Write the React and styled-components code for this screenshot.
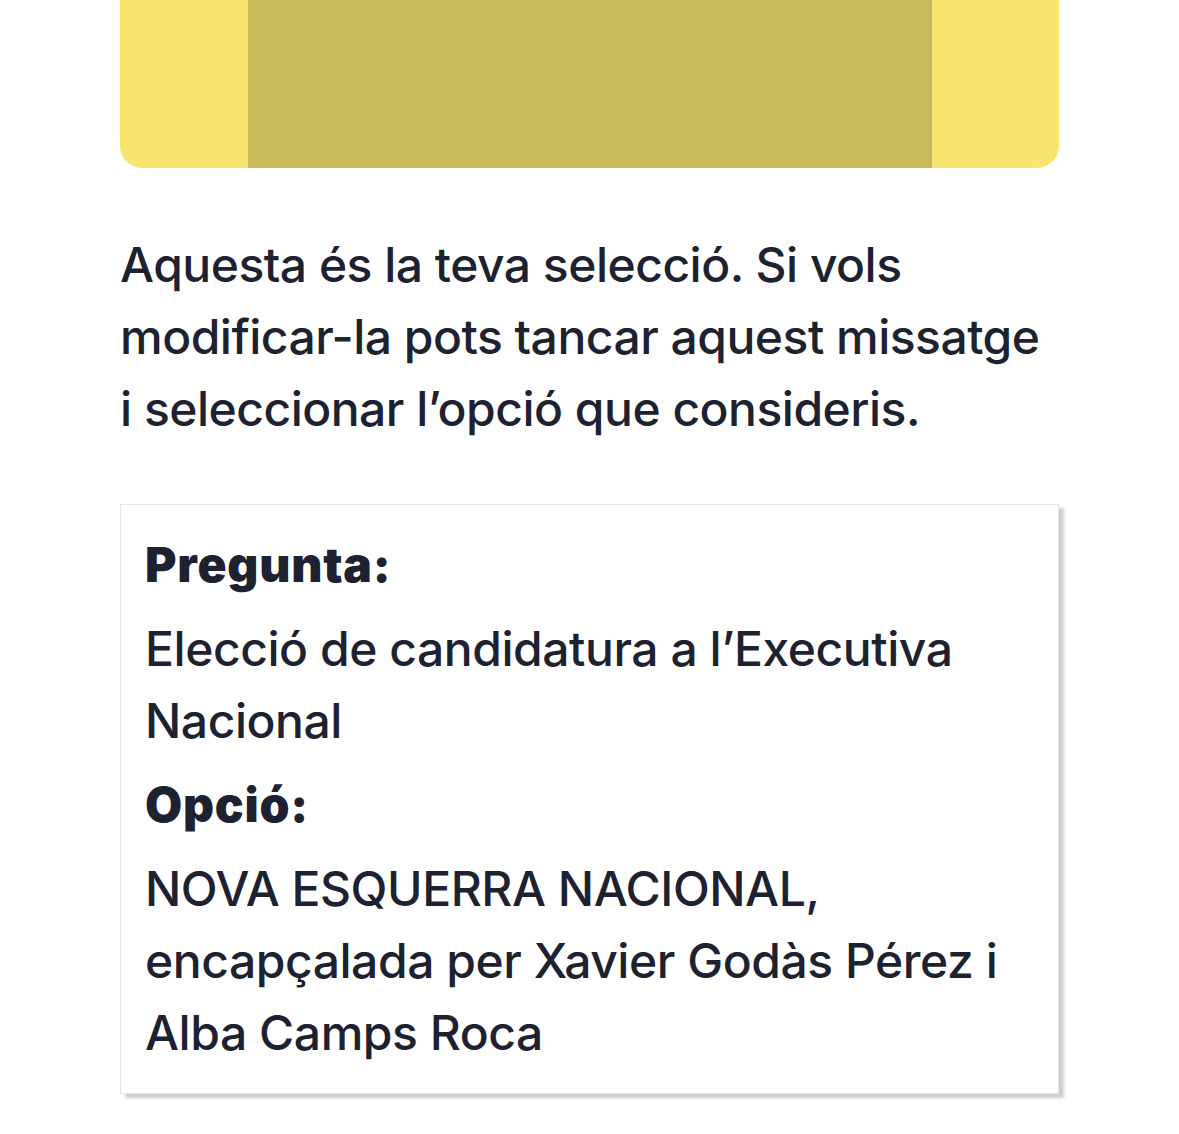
import React from 'react';
import styled, { createGlobalStyle } from 'styled-components';

const GlobalStyle = createGlobalStyle`
  body {
    margin: 0;
    background: #ffffff;
    font-family: Inter, "Noto Sans", sans-serif;
    color: #1d2130;
  }
`;

const Page = styled.div`
  padding: 0 120px 40px 120px;
`;

const Banner = styled.div`
  display: flex;
  height: 168px;
  background: #f9e46f;
  border-radius: 0 0 22px 22px;
  overflow: hidden;
  padding: 0 127px 0 128px;
`;

const BannerPanel = styled.div`
  flex: 1;
  background: #c8b95a;
`;

const Intro = styled.p`
  margin: 61px 0 59px 0;
  font-size: 48px;
  line-height: 72px;
  font-weight: 500;
  letter-spacing: -0.5px;
`;

const Card = styled.div`
  display: flex;
  flex-direction: column;
  gap: 12px;
  padding: 24px;
  border: 1px solid #e6e6e6;
  box-shadow: 5px 4px 3px rgba(0, 0, 0, 0.2);
  background: #fff;
`;

const Label = styled.div`
  font-size: 48px;
  line-height: 72px;
  font-weight: 900;
  letter-spacing: 0.8px;
`;

const Value = styled.div`
  font-size: 48px;
  line-height: 72px;
  font-weight: 500;
  letter-spacing: -0.45px;
`;

export default function App() {
  return (
    <Page>
      <GlobalStyle />
      <Banner>
        <BannerPanel />
      </Banner>
      <Intro>
        Aquesta és la teva selecció. Si vols modificar-la pots tancar aquest missatge i seleccionar l’opció que consideris.
      </Intro>
      <Card>
        <Label>Pregunta:</Label>
        <Value>Elecció de candidatura a l’Executiva Nacional</Value>
        <Label>Opció:</Label>
        <Value>NOVA ESQUERRA NACIONAL, encapçalada per Xavier Godàs Pérez i Alba Camps Roca</Value>
      </Card>
    </Page>
  );
}
